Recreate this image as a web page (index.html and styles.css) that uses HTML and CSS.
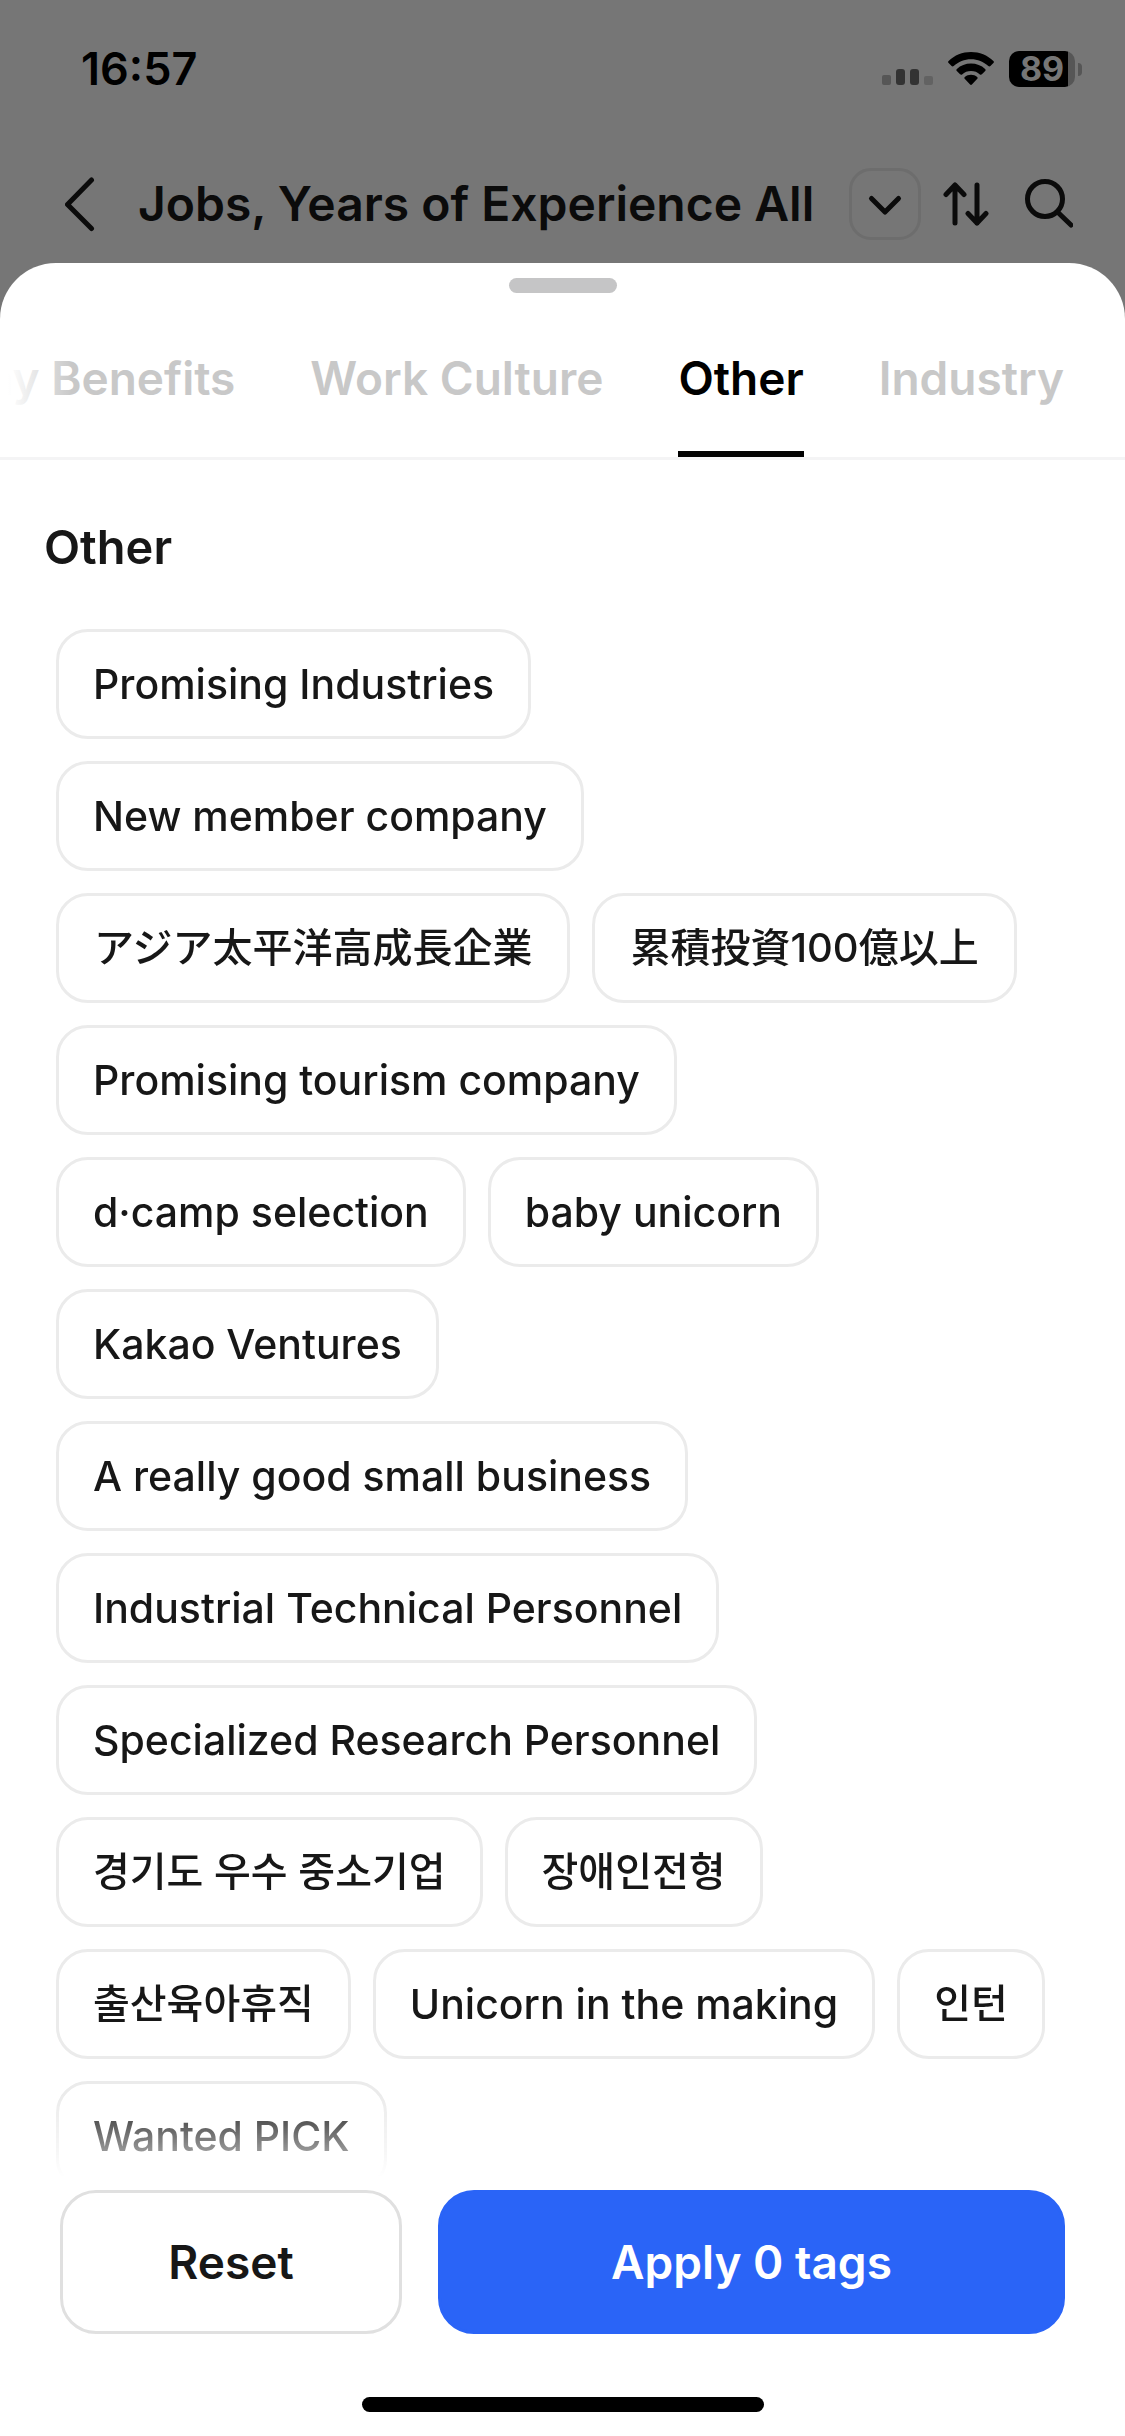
FILE: index.html
```html
<!DOCTYPE html>
<html lang="en">
<head>
<meta charset="utf-8">
<meta name="viewport" content="width=device-width, initial-scale=1">
<title>Jobs – Tag filter</title>
<link rel="stylesheet" href="styles.css">
</head>
<body>
<div class="status-bar">
  <span class="clock">16:57</span>
  <div class="status-icons">
    <svg class="signal" width="51" height="34" viewBox="0 0 51 34" aria-hidden="true">
      <rect x="0" y="23" width="9" height="10" rx="2" fill="#565656"/>
      <rect x="14" y="17" width="9" height="16" rx="3" fill="#333"/>
      <rect x="28" y="17" width="9" height="16" rx="3" fill="#333"/>
      <rect x="42" y="24" width="9" height="9" rx="2" fill="#626262"/>
    </svg>
    <svg class="wifi" width="46" height="34" viewBox="0 0 46 34" aria-hidden="true">
      <path d="M23 0C14.500 0 6.500 3.300 .6 8.900c-.7.700-.7 1.500 0 2.200l3 3c.6.600 1.400.600 2.100 0C10.400 9.700 16.400 7.200 23 7.200s12.600 2.500 17.300 6.900c.7.600 1.500.600 2.100 0l3-3c.7-.7.700-1.500 0-2.200C39.500 3.300 31.500 0 23 0z"/>
      <path d="M23 11.500c-5.400 0-10.400 2-14.100 5.400-.7.600-.7 1.500-.1 2.100l3.300 3.300c.6.600 1.400.600 2 .1 2.400-2.200 5.500-3.400 8.900-3.400s6.500 1.200 8.900 3.400c.6.500 1.400.500 2-.1l3.300-3.300c.6-.6.600-1.500-.1-2.100-3.700-3.400-8.700-5.400-14.100-5.400z"/>
      <path d="M23 22.700c-2.400 0-4.500.8-6.200 2.200-.6.600-.6 1.400-.1 1.900l5.400 5.700c.5.600 1.300.600 1.800 0l5.400-5.700c.5-.5.500-1.300-.1-1.900-1.700-1.400-3.800-2.200-6.200-2.200z"/>
    </svg>
    <div class="battery"><span class="battery-level">89</span><span class="battery-nub"></span></div>
  </div>
</div>

<header class="top-nav">
  <button class="icon-button back" aria-label="Back">
    <svg width="30" height="56" viewBox="0 0 30 56"><path d="m26.500 4-24 24.500 24 24"/></svg>
  </button>
  <h1 class="page-title">Jobs, Years of Experience All</h1>
  <button class="icon-button expand" aria-label="Expand filters">
    <svg width="36" height="24" viewBox="0 0 36 24"><path d="m4.500 6.500 13.500 13.500L31.500 6.500"/></svg>
  </button>
  <button class="icon-button" aria-label="Sort">
    <svg width="46" height="46" viewBox="0 0 46 46"><path d="M12 42V4M3 13.500 12 4l9 9.500M34 4v38M25 32.500l9 9.500 9-9.500"/></svg>
  </button>
  <button class="icon-button search" aria-label="Search">
    <svg width="50" height="50" viewBox="0 0 50 50"><circle cx="22" cy="20" r="17.500"/><path d="m34.500 33 13.500 13"/></svg>
  </button>
</header>

<main class="sheet">
  <div class="grabber"></div>
  <nav class="tabs">
    <button class="tab">Company Benefits</button>
    <button class="tab">Work Culture</button>
    <button class="tab active" aria-current="true">Other</button>
    <button class="tab">Industry</button>
  </nav>

  <section class="tag-area">
    <h2 class="section-title">Other</h2>
    <div class="tags">
      <button class="tag">Promising Industries</button>
      <button class="tag">New member company</button>
      <button class="tag" lang="ja">アジア太平洋高成長企業</button>
      <button class="tag" lang="ja">累積投資100億以上</button>
      <button class="tag">Promising tourism company</button>
      <button class="tag">d·camp selection</button>
      <button class="tag">baby unicorn</button>
      <button class="tag">Kakao Ventures</button>
      <button class="tag">A really good small business</button>
      <button class="tag">Industrial Technical Personnel</button>
      <button class="tag">Specialized Research Personnel</button>
      <button class="tag" lang="ko">경기도 우수 중소기업</button>
      <button class="tag" lang="ko">장애인전형</button>
      <button class="tag" lang="ko">출산육아휴직</button>
      <button class="tag">Unicorn in the making</button>
      <button class="tag" lang="ko">인턴</button>
      <button class="tag">Wanted PICK</button>
    </div>
  </section>

  <footer class="actions">
    <button class="action reset">Reset</button>
    <button class="action apply">Apply 0 tags</button>
  </footer>
  <div class="home-indicator"></div>
</main>
</body>
</html>
```
FILE: styles.css
```css
* {
  box-sizing: border-box;
}

body {
  margin: 0;
  height: 100vh;
  display: flex;
  flex-direction: column;
  overflow: hidden;
  background: #767676;
  color: #171717;
  font-family: Inter, "Noto Sans CJK KR", sans-serif;
}

button {
  margin: 0;
  padding: 0;
  border: 0;
  background: none;
  color: inherit;
  font: inherit;
  white-space: nowrap;
}

svg {
  display: block;
}

/* Status bar */
.status-bar {
  display: flex;
  justify-content: space-between;
  align-items: center;
  padding: 39px 43px 39px 81px;
  color: #000;
}

.clock {
  font-size: 45px;
  font-weight: 600;
  line-height: 60px;
}

.status-icons {
  display: flex;
  align-items: center;
  gap: 15px;
}

.battery {
  display: flex;
  align-items: center;
  gap: 3px;
}

.battery-level {
  width: 66px;
  border-radius: 10px;
  background: linear-gradient(to right, #000 59px, #565656 59px);
  color: #767676;
  font-size: 34px;
  font-weight: 700;
  line-height: 36px;
  text-align: center;
}

.battery-nub {
  width: 4px;
  height: 13px;
  border-radius: 0 4px 4px 0;
  background: #565656;
}

/* Page header behind the sheet */
.top-nav {
  display: flex;
  align-items: center;
  gap: 22px;
  padding: 30px 52px 23px 65px;
  color: #0b0b0b;
}

.icon-button svg {
  fill: none;
  stroke: currentColor;
  stroke-width: 5;
  stroke-linecap: round;
  stroke-linejoin: round;
}

.page-title {
  flex: 1;
  margin: 0 0 0 21px;
  font-size: 48px;
  font-weight: 600;
  line-height: 60px;
  white-space: nowrap;
}

.expand {
  display: grid;
  place-items: center;
  width: 72px;
  height: 72px;
  border: 3px solid #6d6d6d;
  border-radius: 22px;
}

.search {
  margin-left: 12px;
}

/* Bottom sheet */
.sheet {
  flex: 1;
  min-height: 0;
  display: flex;
  flex-direction: column;
  padding-top: 15px;
  border-radius: 56px 56px 0 0;
  background: #fff;
}

.grabber {
  align-self: center;
  width: 108px;
  height: 15px;
  flex: none;
  border-radius: 8px;
  background: #c5c5c6;
}

.tabs {
  position: relative;
  flex: none;
  display: flex;
  justify-content: flex-end;
  gap: 75px;
  padding: 0 61px;
  overflow: hidden;
  border-bottom: 3px solid #f4f4f5;
}

/* Fades the tabs that are scrolled off the left edge */
.tabs::before {
  content: "";
  position: absolute;
  inset: 50px auto 0 0;
  width: 72px;
  background: linear-gradient(to right, #fff 8px, rgba(255, 255, 255, 0));
}

.tab {
  flex: none;
  padding: 55px 0 43px;
  border-bottom: 6px solid transparent;
  color: #c8c8c8;
  font-size: 46px;
  font-weight: 600;
  line-height: 60px;
}

.tab.active {
  border-color: #000;
  color: #000;
}

.tag-area {
  flex: 1;
  min-height: 0;
  overflow: hidden;
  padding: 57px 69px 0 56px;
  -webkit-mask-image: linear-gradient(to top, transparent, rgba(0, 0, 0, 0.45) 26px, #000 84px);
  mask-image: linear-gradient(to top, transparent, rgba(0, 0, 0, 0.45) 26px, #000 84px);
}

.section-title {
  margin: 0 0 52px -12px;
  font-size: 47px;
  font-weight: 600;
  line-height: 60px;
}

.tags {
  display: flex;
  flex-wrap: wrap;
  gap: 22px;
}

.tag {
  padding: 22px 34px;
  border: 3px solid #ebebeb;
  border-radius: 32px;
  font-size: 41px;
  font-weight: 500;
  line-height: 60px;
}

.tag:lang(ja),
.tag:lang(ko) {
  font-size: 40px;
}

.tag:lang(ja) {
  padding: 22px 35px;
  font-family: Inter, "Noto Sans CJK JP", sans-serif;
}

.actions {
  flex: none;
  display: grid;
  grid-template-columns: 6fr 11fr;
  gap: 36px;
  padding: 13px 60px 63px;
}

.action {
  padding: 39px 0;
  border: 3px solid #2a64f7;
  border-radius: 36px;
  font-size: 46px;
  font-weight: 600;
  line-height: 60px;
}

.reset {
  border-color: #e0e0e0;
}

.apply {
  background: #2a64f7;
  color: #fff;
}

.home-indicator {
  flex: none;
  align-self: center;
  width: 402px;
  height: 15px;
  margin-bottom: 24px;
  border-radius: 8px;
  background: #000;
}
```
